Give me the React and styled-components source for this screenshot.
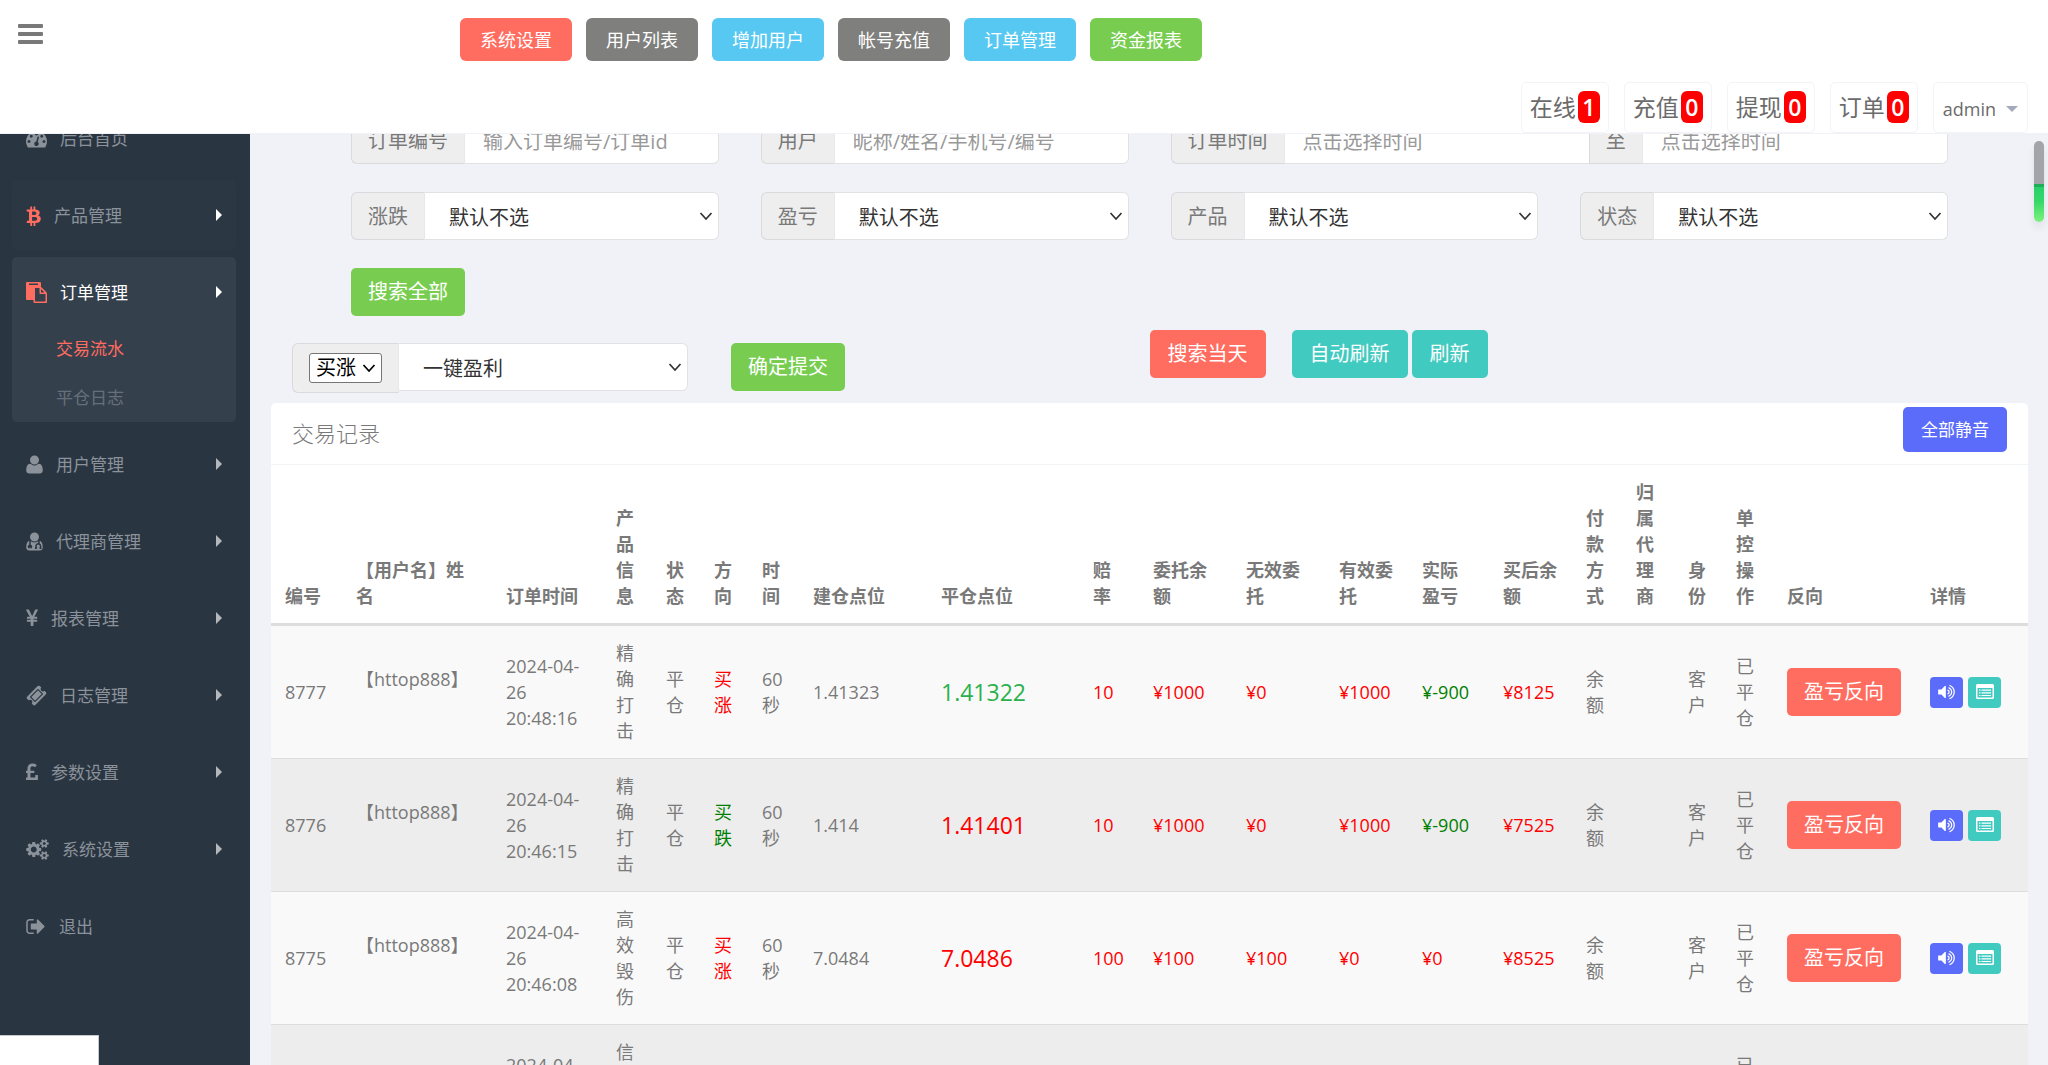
import React, { useState } from 'react';
import styled, { createGlobalStyle } from 'styled-components';

const GlobalStyle = createGlobalStyle`
  * {
    box-sizing: border-box;
  }

  body {
    margin: 0;
    background: #f1f2f7;
    color: #797979;
    font-family: "Open Sans", "Noto Sans CJK SC", sans-serif;
    font-size: 18px;
    line-height: 26px;
  }

  button, input, select {
    margin: 0;
    font-family: inherit;
  }

  a {
    color: inherit;
    text-decoration: none;
  }

  ul {
    margin: 0;
    padding: 0;
    list-style: none;
  }
`;

const colors = {
  red: '#ff6c60',
  gray: '#7f7f7e',
  blue: '#57c8f2',
  green: '#78cd51',
  teal: '#41cac0',
  indigo: '#5b6cfb',
};

const chevron = (color) =>
  `url("data:image/svg+xml,%3Csvg xmlns='http://www.w3.org/2000/svg' viewBox='0 0 14 10' fill='none' stroke='%23${color}' stroke-width='1.7'%3E%3Cpath d='M1.500 2l5.500 6 5.500-6'/%3E%3C/svg%3E")`;

/* ---------- layout ---------- */

const Page = styled.div`
  display: flex;
  flex-direction: column;
  height: 100vh;
  overflow: hidden;
`;

const Header = styled.header`
  flex: none;
  height: 134px;
  display: flex;
  flex-direction: column;
  justify-content: space-between;
  padding: 18px 20px 0 18px;
  background: #fff;
  border-bottom: 1px solid #f1f2f7;
`;

const HeaderTop = styled.div`
  display: flex;
  align-items: flex-start;
`;

const MenuToggle = styled.button`
  width: 25px;
  height: 28px;
  padding: 3px 0 0;
  border: 0;
  background: none;
  color: #797979;
  cursor: pointer;

  svg {
    display: block;
  }
`;

const QuickNav = styled.nav`
  display: flex;
  gap: 14px;
  margin-left: 417px;
`;

const QuickLink = styled.a`
  padding: 9px 20px 8px;
  border-radius: 6px;
  background: ${(p) => colors[p.$tone]};
  color: #fff;
`;

const Notices = styled.div`
  display: flex;
  justify-content: flex-end;
  gap: 15px;
`;

const Notice = styled.a`
  display: flex;
  align-items: center;
  gap: 2px;
  height: 51px;
  padding: 0 8px 2px;
  border: 1px solid #f3f4f8;
  border-radius: 5px;
  font-size: 23px;
  color: #6b6b6b;
`;

const Count = styled.span`
  width: 22px;
  height: 32px;
  border-radius: 6px;
  background: #f00;
  color: #fff;
  font-weight: 600;
  line-height: 32px;
  text-align: center;
`;

const UserMenu = styled.button`
  display: flex;
  align-items: center;
  gap: 10px;
  padding: 3px 9px 0;
  border: 1px solid #f3f4f8;
  border-radius: 5px;
  background: #fff;
  color: #6b6b6b;
  font-size: 18px;
`;

const CaretDown = styled.span`
  border: 6px solid transparent;
  border-top-color: #a4aabb;
  border-bottom: 0;
`;

const Body = styled.div`
  flex: 1;
  min-height: 0;
  display: flex;
  overflow: hidden;
`;

/* ---------- sidebar ---------- */

const Sidebar = styled.aside`
  flex: none;
  width: 250px;
  padding: 0 14px 0 12px;
  background: #2a3542;
  overflow: hidden;
`;

const Menu = styled.ul`
  display: flex;
  flex-direction: column;
  gap: 7px;
  margin-top: -31px;
  font-size: 17px;
`;

const MenuItem = styled.li`
  border-radius: 5px;
  background: ${(p) => (p.$open ? '#35404d' : p.$hot ? '#2c3744' : 'none')};
`;

const MenuLink = styled.a`
  display: flex;
  align-items: center;
  gap: 13px;
  height: 70px;
  padding: 0 14px;
  color: ${(p) => (p.$open ? '#fff' : '#8b929a')};

  svg {
    flex: none;
    color: ${(p) => (p.$hot ? colors.red : '#8b929a')};
  }
`;

const MenuLabel = styled.span`
  flex: 1;
  padding-top: 2px;
`;

const CaretRight = styled.span`
  border: 6px solid transparent;
  border-left-color: ${(p) => (p.$hot ? '#fff' : '#b4b7bb')};
  border-right: 0;
`;

const SubMenu = styled.ul`
  margin-top: -3px;
`;

const SubLink = styled.a`
  display: block;
  padding: 12px 44px;
  line-height: 25px;
  color: ${(p) => (p.$current ? colors.red : '#66707b')};
`;

/* ---------- search form ---------- */

const Main = styled.main`
  flex: 1;
  min-width: 0;
  padding: 0 20px 0 21px;
`;

const Filters = styled.form`
  display: grid;
  grid-template-columns: repeat(4, 1fr);
  gap: 28px 42px;
  margin-top: -18px;
  padding: 0 80px;
`;

const Group = styled.div`
  display: flex;
  align-items: flex-start;
  grid-column: span ${(p) => p.$span || 1};
`;

const Addon = styled.label`
  flex: none;
  height: 48px;
  padding: 0 16px;
  border: 1px solid #d9d9de;
  border-right-color: #e8e8ec;
  border-radius: ${(p) => (p.$inner ? 0 : '6px 0 0 6px')};
  background: #eee;
  color: #797979;
  font-size: 20px;
  line-height: 48px;
`;

const field = `
  flex: 1;
  min-width: 0;
  height: 48px;
  border: 1px solid #e2e2e4;
  border-left: 0;
  border-radius: 0 6px 6px 0;
  font-size: 20px;
`;

const Field = styled.input`
  ${field}
  padding: 2px 18px 0;
  background: #fff;
  color: #333;

  &:not(:last-child) {
    border-right: 0;
    border-radius: 0;
  }

  &::placeholder {
    color: #999;
  }
`;

const Select = styled.select`
  ${field}
  appearance: none;
  padding: 2px 30px 0 24px;
  background: #fff ${chevron('333')} no-repeat right 5px center / 14px 10px;
  color: #333;
`;

const Button = styled.button`
  height: 48px;
  padding: 0 17px;
  border: 0;
  border-radius: 5px;
  background: ${(p) => colors[p.$tone]};
  color: #fff;
  font-size: 20px;
  line-height: 26px;
  white-space: nowrap;
  cursor: pointer;
`;

const ButtonCell = styled.div`
  grid-column: 1 / -1;
  display: flex;
`;

const Tools = styled.div`
  display: grid;
  grid-template-columns: 1fr 1fr;
  padding: 14px 0 10px;
`;

const OneKey = styled.form`
  display: flex;
  gap: 43px;
  padding: 13px 0 0 21px;
`;

const OneKeyGroup = styled(Group)`
  width: 396px;
`;

const SelectAddon = styled.div`
  display: flex;
  align-items: center;
  height: 50px;
  padding: 0 16px;
  border: 1px solid #d9d9de;
  border-right-color: #e8e8ec;
  border-radius: 6px 0 0 6px;
  background: #eee;
`;

const MiniSelect = styled.select`
  appearance: none;
  width: 73px;
  height: 30px;
  padding: 0 0 0 6px;
  border: 1px solid #767676;
  border-radius: 3px;
  background: #fff ${chevron('000')} no-repeat right 5px center / 14px 10px;
  color: #000;
  font-size: 20px;
  line-height: 26px;
`;

const Actions = styled.div`
  display: flex;
  align-items: flex-start;
  gap: 4px;
`;

const ActionButton = styled(Button)`
  padding: 0 18px;
`;

const TodayButton = styled(ActionButton)`
  margin-right: 22px;
`;

/* ---------- records ---------- */

const Panel = styled.section`
  border-radius: 5px 5px 0 0;
  background: #fff;
`;

const PanelHeader = styled.div`
  display: flex;
  align-items: flex-start;
  justify-content: space-between;
  height: 62px;
  padding: 4px 21px 0;
  border-bottom: 1px solid #f3f4f8;
`;

const PanelTitle = styled.h2`
  margin: 0;
  font-size: 22px;
  font-weight: 300;
  line-height: 52px;
`;

const MuteButton = styled(Button)`
  height: 45px;
  padding: 0 18px;
  font-size: 17px;
`;

const Table = styled.table`
  width: 100%;
  table-layout: fixed;
  border-collapse: separate;
  border-spacing: 0;
`;

const Th = styled.th`
  padding: 14px;
  border-bottom: 3px solid #ddd;
  font-weight: 700;
  text-align: left;
  vertical-align: bottom;
`;

const Row = styled.tr`
  background: ${(p) => (p.$even ? '#ededed' : '#f9f9f9')};
`;

const Td = styled.td`
  height: 133px;
  padding: 14px;
  border-bottom: 1px solid #ddd;
  color: ${(p) => p.$color || 'inherit'};
  font-size: ${(p) => (p.$big ? '23px' : '18px')};
  vertical-align: middle;
`;

const IconButtons = styled.div`
  display: flex;
  gap: 5px;
`;

const IconButton = styled.button`
  display: flex;
  align-items: center;
  justify-content: center;
  width: 33px;
  height: 31px;
  padding: 0;
  border: 0;
  border-radius: 4px;
  background: ${(p) => colors[p.$tone]};
  color: #fff;
`;

/* ---------- floating bits ---------- */

const ScrollThumb = styled.div`
  position: fixed;
  top: 141px;
  right: 4px;
  width: 10px;
  height: 81px;
  border-radius: 5px;
  background: linear-gradient(#a3a3a8 0 43px, #1fae58 43px 46px, #28d06c 46px, #35d768 60px, #7df27c);
  box-shadow: 0 6px 8px rgba(0, 0, 0, 0.08);
`;

const StatusBubble = styled.div`
  position: fixed;
  left: 0;
  bottom: 0;
  width: 99px;
  height: 30px;
  border: 1px solid #c5c8cc;
  border-width: 1px 1px 0 0;
  background: #fff;
`;

/* ---------- icons ---------- */

const userHead =
  'M1088 1024q0-159-112.5-271.5t-271.5-112.5t-271.5 112.5t-112.5 271.5t112.5 271.5t271.5 112.5t271.5-112.5t112.5-271.5z';

// width is the advance of the glyph on an 1792 unit em; "up" marks y-up outlines
const glyphs = {
  dashboard: {
    width: 1792,
    d: 'M384 1152q0-53-37.5-90.5t-90.5-37.5-90.5 37.5-37.5 90.5 37.5 90.5 90.5 37.5 90.5-37.5 37.5-90.5zm192-448q0-53-37.5-90.5t-90.5-37.5-90.5 37.5-37.5 90.5 37.5 90.5 90.5 37.5 90.5-37.5 37.5-90.5zm428 481l101-382q6-26-7.5-48.5t-38.5-29.5-48 6.5-30 39.5l-101 382q-60 5-107 43.5t-63 98.5q-20 77 20 146t117 89 146-20 89-117q16-60-6-117t-72-91zm660-33q0-53-37.5-90.5t-90.5-37.5-90.5 37.5-37.5 90.5 37.5 90.5 90.5 37.5 90.5-37.5 37.5-90.5zm-640-640q0-53-37.5-90.5t-90.5-37.5-90.5 37.5-37.5 90.5 37.5 90.5 90.5 37.5 90.5-37.5 37.5-90.5zm448 192q0-53-37.5-90.5t-90.5-37.5-90.5 37.5-37.5 90.5 37.5 90.5 90.5 37.5 90.5-37.5 37.5-90.5zm320 448q0 261-141 483-19 29-54 29h-1402q-35 0-54-29-141-221-141-483 0-182 71-348t191-286 286-191 348-71 348 71 286 191 191 286 71 348z',
  },
  btc: {
    width: 1280,
    d: 'M1167 640q18 182-131 258 117 28 175 103t45 214q-7 71-32.5 125t-64.5 89-97 58.5-121.5 34.5-145.5 15v255h-154v-251q-80 0-122-1v252h-154v-255q-18 0-54-.5t-55-.5h-200l31-183h111q50 0 58-51v-402h16q-6-1-16-1v-287q-13-68-89-68h-111v-164l212 1q64 0 97-1v-252h154v247q82-2 122-2v-245h154v252q79 7 140 22.5t113 45 82.5 78 36.5 114.5zm-215 545q0-36-15-64t-37-46-57.5-30.5-65.5-18.5-74-9-69-3-64.5 1-47.5 1v338q8 0 37 .5t48 .5 53-1.5 58.5-4 57-8.5 55.5-14 47.5-21 39.5-30 24.5-40 9.5-51zm-71-476q0-33-12.5-58.5t-30.5-42-48-28-55-16.5-61.5-8-58-2.5-54 1-39.5 .5v307q5 0 34.5 .5t46.5 0 50-2 55-5.5 51.5-11 48.5-18.5 37-27 27-38.5 9-51z',
  },
  paste: {
    width: 1792,
    d: 'M768 1664h896v-640h-416q-40 0-68-28t-28-68v-416h-384v1152zm256-1440v-64q0-13-9.5-22.5t-22.5-9.5h-704q-13 0-22.5 9.5t-9.5 22.5v64q0 13 9.5 22.5t22.5 9.5h704q13 0 22.5-9.5t9.5-22.5zm256 672h299l-299-299v299zm512 128v672q0 40-28 68t-68 28h-960q-40 0-68-28t-28-68v-160h-544q-40 0-68-28t-28-68v-1344q0-40 28-68t68-28h1088q40 0 68 28t28 68v328q21 13 36 28l408 408q28 28 48 76t20 88z',
  },
  user: {
    width: 1408,
    up: true,
    d: 'M1408 131q0-120-73-189.5t-194-69.5h-874q-121 0-194 69.5t-73 189.5q0 53 3.5 103.5t14 109t26.5 108.5t43 97.5t62 81t85.5 53.5t111.5 20q9 0 42-21.5t74.5-48t108-48t133.5-21.5t133.5 21.5t108 48t74.5 48t42 21.5q61 0 111.5-20t85.5-53.5t62-81t43-97.5t26.5-108.5t14-109t3.5-103.5z' + userHead,
  },
  doctor: {
    width: 1408,
    up: true,
    d: 'M384 64q0-26-19-45t-45-19t-45 19t-19 45t19 45t45 19t45-19t19-45zM1408 131q0-121-73-190t-194-69h-874q-121 0-194 69t-73 190q0 68 5.5 131t24 138t47.5 132.5t81 103t120 60.5q-22-52-22-120v-203q-58-20-93-70t-35-111q0-80 56-136t136-56t136 56t56 136q0 61-35.5 111t-92.5 70v203q0 62 25 93q132-104 295-104t295 104q25-31 25-93v-64q-106 0-181-75t-75-181v-89q-32-29-32-71q0-40 28-68t68-28t68 28t28 68q0 42-32 71v89q0 52 38 90t90 38t90-38t38-90v-89q-32-29-32-71q0-40 28-68t68-28t68 28t28 68q0 42-32 71v89q0 68-34.5 127.5t-93.5 93.5q0 10 .5 42.5t0 48t-2.5 41.5t-7 47t-13 40q68-15 120-60.5t81-103t47.5-132.5t24-138t5.5-131z' + userHead,
  },
  yen: {
    width: 1027,
    d: 'M603 1536h-172q-13 0-22.5-9t-9.5-23v-330h-288q-13 0-22.5-9t-9.5-23v-103q0-13 9.5-22.5t22.5-9.5h288v-85h-288q-13 0-22.5-9t-9.5-23v-104q0-13 9.5-22.5t22.5-9.5h214l-321-578q-8-16 0-32 10-16 28-16h194q19 0 29 18l215 425q19 38 56 125 10-24 30.5-68t27.5-61l191-420q8-19 29-19h191q17 0 27 16 9 14 1 31l-313 579h215q13 0 22.5 9.5t9.5 22.5v104q0 14-9.5 23t-22.5 9h-290v85h290q13 0 22.5 9.5t9.5 22.5v103q0 14-9.5 23t-22.5 9h-290v330q0 13-9.5 22.5t-22.5 9.5z',
  },
  ticket: {
    width: 1792,
    d: 'M1024 452l316 316-572 572-316-316zm-211 979l618-618q19-19 19-45t-19-45l-362-362q-18-18-45-18t-45 18l-618 618q-19 19-19 45t19 45l362 362q18 18 45 18t45-18zm889-637l-907 908q-37 37-90.5 37t-90.5-37l-126-126q56-56 56-136t-56-136-136-56-136 56l-125-126q-37-37-37-90.5t37-90.5l907-906q37-37 90.5-37t90.5 37l125 125q-56 56-56 136t56 136 136 56 136-56l126 125q37 37 37 90.5t-37 90.5z',
  },
  pound: {
    width: 1027,
    d: 'M1020 1137v367q0 14-9 23t-23 9h-956q-14 0-23-9t-9-23v-150q0-13 9.5-22.5t22.5-9.5h97v-383h-95q-14 0-23-9.5t-9-22.5v-131q0-14 9-23t23-9h95v-223q0-171 123.5-282t313.5-111q185 0 335 125 9 8 10 20.5t-7 22.5l-103 127q-9 11-22 12-13 2-23-7-5-5-26-19t-69-32-93-18q-85 0-137 47t-52 123v215h305q13 0 22.5 9t9.5 23v131q0 13-9.5 22.5t-22.5 9.5h-305v379h414v-181q0-13 9-22.5t23-9.5h164q14 0 23 9.5t9 22.5z',
  },
  cogs: {
    width: 1920,
    d: 'M896 896q0-106-75-181t-181-75-181 75-75 181 75 181 181 75 181-75 75-181zm768 512q0-52-38-90t-90-38-90 38-38 90q0 53 37.5 90.5t90.5 37.5 90.5-37.5 37.5-90.5zm0-1024q0-52-38-90t-90-38-90 38-38 90q0 53 37.5 90.5t90.5 37.5 90.5-37.5 37.5-90.5zm-384 421v185q0 10-7 19.5t-16 10.5l-155 24q-11 35-32 76 34 48 90 115 7 11 7 20 0 12-7 19-23 30-82.5 89.5t-78.5 59.5q-11 0-21-7l-115-90q-37 19-77 31-11 108-23 155-7 24-30 24h-186q-11 0-20-7.5t-10-17.5l-23-153q-34-10-75-31l-118 89q-7 7-20 7-11 0-21-8-144-133-144-160 0-9 7-19 10-14 41-53t47-61q-23-44-35-82l-152-24q-10-1-17-9.5t-7-19.5v-185q0-10 7-19.5t16-10.5l155-24q11-35 32-76-34-48-90-115-7-11-7-20 0-12 7-20 22-30 82-89t79-59q11 0 21 7l115 90q34-18 77-32 11-108 23-154 7-24 30-24h186q11 0 20 7.5t10 17.5l23 153q34 10 75 31l118-89q8-7 20-7 11 0 21 8 144 133 144 160 0 8-7 19-12 16-42 54t-45 60q23 48 34 82l152 23q10 2 17 10.5t7 19.5zm640 533v140q0 16-149 31-12 27-30 52 51 113 51 138 0 4-4 7-122 71-124 71-8 0-46-47t-52-68q-20 2-30 2t-30-2q-14 21-52 68t-46 47q-2 0-124-71-4-3-4-7 0-25 51-138-18-25-30-52-149-15-149-31v-140q0-16 149-31 13-29 30-52-51-113-51-138 0-4 4-7 4-2 35-20t59-34 30-16q8 0 46 46.5t52 67.5q20-2 30-2t30 2q51-71 92-112l6-2q4 0 124 70 4 3 4 7 0 25-51 138 17 23 30 52 149 15 149 31zm0-1024v140q0 16-149 31-12 27-30 52 51 113 51 138 0 4-4 7-122 71-124 71-8 0-46-47t-52-68q-20 2-30 2t-30-2q-14 21-52 68t-46 47q-2 0-124-71-4-3-4-7 0-25 51-138-18-25-30-52-149-15-149-31v-140q0-16 149-31 13-29 30-52-51-113-51-138 0-4 4-7 4-2 35-20t59-34 30-16q8 0 46 46.5t52 67.5q20-2 30-2t30 2q51-71 92-112l6-2q4 0 124 70 4 3 4 7 0 25-51 138 17 23 30 52 149 15 149 31z',
  },
  signOut: {
    width: 1664,
    d: 'M640 1440q0 4 1 20t.5 26.5-3 23.5-10 19.5-20.5 6.5h-320q-119 0-203.5-84.5t-84.5-203.5v-704q0-119 84.5-203.5t203.5-84.5h320q13 0 22.5 9.5t9.5 22.5q0 4 1 20t.5 26.5-3 23.5-10 19.5-20.5 6.5h-320q-66 0-113 47t-47 113v704q0 66 47 113t113 47h312l11.5 1 11.5 3 8 5.5 7 9 2 13.5zm928-544q0 26-19 45l-544 544q-19 19-45 19t-45-19-19-45v-288h-448q-26 0-45-19t-19-45v-384q0-26 19-45t45-19h448v-288q0-26 19-45t45-19 45 19l544 544q19 19 19 45z',
  },
  volume: {
    width: 1664,
    d: 'M768 352v1088q0 26-19 45t-45 19-45-19l-333-333h-262q-26 0-45-19t-19-45v-384q0-26 19-45t45-19h262l333-333q19-19 45-19t45 19 19 45zm384 544q0 76-42.5 141.5t-112.5 93.5q-10 5-25 5-26 0-45-18.5t-19-45.5q0-21 12-35.5t29-25 34-23 29-36 12-56.5-12-56.5-29-36-34-23-29-25-12-35.5q0-27 19-45.5t45-18.5q15 0 25 5 70 27 112.5 93t42.5 142zm256 0q0 153-85 282.5t-225 188.5q-13 5-25 5-27 0-46-19t-19-45q0-39 39-59 56-29 76-44 74-54 115.5-135.5t41.5-173.5-41.5-173.5-115.5-135.5q-20-15-76-44-39-20-39-59 0-26 19-45t45-19q13 0 26 5 140 59 225 188.5t85 282.5zm256 0q0 230-127 422.5t-338 283.5q-13 5-26 5-26 0-45-19t-19-45q0-36 39-59 7-4 22.5-10.5t22.5-10.5q46-25 82-51 123-91 192-227t69-289-69-289-192-227q-36-26-82-51-7-4-22.5-10.5t-22.5-10.5q-39-23-39-59 0-26 19-45t45-19q13 0 26 5 211 91 338 283.5t127 422.5z',
  },
};

function Glyph({ name, size = 21 }) {
  const { width, up, d } = glyphs[name];
  return (
    <svg
      width={Math.round((width / 1792) * size)}
      height={size}
      viewBox={`0 0 ${width} 1792`}
      fill="currentColor"
      aria-hidden="true"
    >
      <path d={d} transform={up ? 'translate(0 1536) scale(1 -1)' : undefined} />
    </svg>
  );
}

function BarsIcon() {
  return (
    <svg width="25" height="22" viewBox="0 0 25 22" fill="currentColor" aria-hidden="true">
      <rect width="25" height="4" y="1" rx="1" />
      <rect y="9" width="25" height="4" rx="1" />
      <rect y="17" width="25" height="4" rx="1" />
    </svg>
  );
}

function ListIcon() {
  return (
    <svg width="18" height="16" viewBox="0 0 18 16" fill="currentColor" aria-hidden="true">
      <path
        fillRule="evenodd"
        d="M1.500 0h15a1.500 1.500 0 0 1 1.500 1.500v12a1.500 1.500 0 0 1-1.500 1.500h-15a1.500 1.500 0 0 1-1.500-1.500v-12a1.500 1.500 0 0 1 1.500-1.500zM1.500 4v9.500h15v-9.500z"
      />
      <path d="M3 5.500h1.500v1.200H3zM5.500 5.500H15v1.200H5.500zM3 8.200h1.500v1.200H3zM5.500 8.200H15v1.200H5.500zM3 10.900h1.500v1.200H3zM5.500 10.900H15v1.200H5.500z" />
    </svg>
  );
}

/* ---------- data ---------- */

const quickLinks = [
  ['系统设置', 'red'],
  ['用户列表', 'gray'],
  ['增加用户', 'blue'],
  ['帐号充值', 'gray'],
  ['订单管理', 'blue'],
  ['资金报表', 'green'],
];

const notices = [
  ['在线', 1],
  ['充值', 0],
  ['提现', 0],
  ['订单', 0],
];

const menu = [
  { label: '后台首页', icon: 'dashboard', leaf: true },
  { label: '产品管理', icon: 'btc', hot: true },
  { label: '订单管理', icon: 'paste', hot: true, children: ['交易流水', '平仓日志'] },
  { label: '用户管理', icon: 'user' },
  { label: '代理商管理', icon: 'doctor' },
  { label: '报表管理', icon: 'yen' },
  { label: '日志管理', icon: 'ticket' },
  { label: '参数设置', icon: 'pound' },
  { label: '系统设置', icon: 'cogs' },
  { label: '退出', icon: 'signOut', leaf: true },
];

const columns = [
  ['编号', 71],
  ['【用户名】姓名', 150],
  ['订单时间', 110],
  ['产品信息', 50],
  ['状态', 48],
  ['方向', 48],
  ['时间', 51],
  ['建仓点位', 128],
  ['平仓点位', 152],
  ['赔率', 60],
  ['委托余额', 93],
  ['无效委托', 93],
  ['有效委托', 83],
  ['实际盈亏', 81],
  ['买后余额', 83],
  ['付款方式', 50],
  ['归属代理商', 52],
  ['身份', 48],
  ['单控操作', 51],
  ['反向', 143],
  ['详情', 112],
];

const orders = [
  { id: 8777, time: '2024-04-26 20:48:16', product: '精确打击', up: true, open: '1.41323', close: '1.41322', closeColor: '#2bb14c', odds: 10, stake: 1000, invalid: 0, valid: 1000, profit: -900, balance: 8125 },
  { id: 8776, time: '2024-04-26 20:46:15', product: '精确打击', up: false, open: '1.414', close: '1.41401', closeColor: '#f00', odds: 10, stake: 1000, invalid: 0, valid: 1000, profit: -900, balance: 7525 },
  { id: 8775, time: '2024-04-26 20:46:08', product: '高效毁伤', up: true, open: '7.0484', close: '7.0486', closeColor: '#f00', odds: 100, stake: 100, invalid: 100, valid: 0, profit: 0, balance: 8525 },
  { id: 8774, time: '2024-04-26 20:45:52', product: '信息支援', up: true, open: '7.0482', close: '7.0485', closeColor: '#f00', odds: 100, stake: 100, invalid: 100, valid: 0, profit: 0, balance: 8625 },
];

/* ---------- parts ---------- */

function SelectField({ id, label }) {
  return (
    <Group>
      <Addon htmlFor={id}>{label}</Addon>
      <Select id={id} defaultValue="">
        <option value="">默认不选</option>
      </Select>
    </Group>
  );
}

function OrderRow({ order, even }) {
  return (
    <Row $even={even}>
      <Td>{order.id}</Td>
      <Td>
        【httop888】
        <br />
        &nbsp;
      </Td>
      <Td>{order.time}</Td>
      <Td>{order.product}</Td>
      <Td>平仓</Td>
      <Td $color={order.up ? '#f00' : '#008000'}>{order.up ? '买涨' : '买跌'}</Td>
      <Td>60秒</Td>
      <Td>{order.open}</Td>
      <Td $big $color={order.closeColor}>{order.close}</Td>
      <Td $color="#f00">{order.odds}</Td>
      <Td $color="#f00">¥{order.stake}</Td>
      <Td $color="#f00">¥{order.invalid}</Td>
      <Td $color="#f00">¥{order.valid}</Td>
      <Td $color={order.profit < 0 ? '#008000' : '#f00'}>¥{order.profit}</Td>
      <Td $color="#f00">¥{order.balance}</Td>
      <Td>余额</Td>
      <Td />
      <Td>客户</Td>
      <Td>已平仓</Td>
      <Td>
        <Button type="button" $tone="red">盈亏反向</Button>
      </Td>
      <Td>
        <IconButtons>
          <IconButton type="button" $tone="indigo" aria-label="静音">
            <Glyph name="volume" size={18} />
          </IconButton>
          <IconButton type="button" $tone="teal" aria-label="详情">
            <ListIcon />
          </IconButton>
        </IconButtons>
      </Td>
    </Row>
  );
}

export default function App() {
  const [opened, setOpened] = useState('订单管理');

  return (
    <Page>
      <GlobalStyle />

      <Header>
        <HeaderTop>
          <MenuToggle type="button" aria-label="菜单">
            <BarsIcon />
          </MenuToggle>
          <QuickNav>
            {quickLinks.map(([label, tone]) => (
              <QuickLink key={label} href="#" $tone={tone}>{label}</QuickLink>
            ))}
          </QuickNav>
        </HeaderTop>
        <Notices>
          {notices.map(([label, count]) => (
            <Notice key={label} href="#">
              {label}
              <Count>{count}</Count>
            </Notice>
          ))}
          <UserMenu type="button">
            admin
            <CaretDown />
          </UserMenu>
        </Notices>
      </Header>

      <Body>
        <Sidebar>
          <Menu>
            {menu.map((item) => {
              const open = Boolean(item.children) && opened === item.label;
              return (
                <MenuItem key={item.label} $open={open} $hot={item.hot}>
                  <MenuLink href="#" $open={open} $hot={item.hot} onClick={() => setOpened(item.label)}>
                    <Glyph name={item.icon} />
                    <MenuLabel>{item.label}</MenuLabel>
                    {!item.leaf && <CaretRight $hot={item.hot} />}
                  </MenuLink>
                  {open && (
                    <SubMenu>
                      {item.children.map((child, i) => (
                        <li key={child}>
                          <SubLink href="#" $current={i === 0}>{child}</SubLink>
                        </li>
                      ))}
                    </SubMenu>
                  )}
                </MenuItem>
              );
            })}
          </Menu>
        </Sidebar>

        <Main>
          <Filters onSubmit={(e) => e.preventDefault()}>
            <Group>
              <Addon htmlFor="orderNo">订单编号</Addon>
              <Field id="orderNo" placeholder="输入订单编号/订单id" />
            </Group>
            <Group>
              <Addon htmlFor="user">用户</Addon>
              <Field id="user" placeholder="昵称/姓名/手机号/编号" />
            </Group>
            <Group $span={2}>
              <Addon htmlFor="from">订单时间</Addon>
              <Field id="from" placeholder="点击选择时间" />
              <Addon htmlFor="to" $inner>至</Addon>
              <Field id="to" placeholder="点击选择时间" />
            </Group>
            <SelectField id="direction" label="涨跌" />
            <SelectField id="profit" label="盈亏" />
            <SelectField id="product" label="产品" />
            <SelectField id="state" label="状态" />
            <ButtonCell>
              <Button type="submit" $tone="green">搜索全部</Button>
            </ButtonCell>
          </Filters>

          <Tools>
            <OneKey onSubmit={(e) => e.preventDefault()}>
              <OneKeyGroup>
                <SelectAddon>
                  <MiniSelect aria-label="方向">
                    <option>买涨</option>
                    <option>买跌</option>
                  </MiniSelect>
                </SelectAddon>
                <Select aria-label="一键操作">
                  <option>一键盈利</option>
                </Select>
              </OneKeyGroup>
              <Button type="submit" $tone="green">确定提交</Button>
            </OneKey>
            <Actions>
              <TodayButton type="button" $tone="red">搜索当天</TodayButton>
              <ActionButton type="button" $tone="teal">自动刷新</ActionButton>
              <ActionButton type="button" $tone="teal">刷新</ActionButton>
            </Actions>
          </Tools>

          <Panel>
            <PanelHeader>
              <PanelTitle>交易记录</PanelTitle>
              <MuteButton type="button" $tone="indigo">全部静音</MuteButton>
            </PanelHeader>
            <Table>
              <colgroup>
                {columns.map(([label, width]) => (
                  <col key={label} width={width} />
                ))}
              </colgroup>
              <thead>
                <tr>
                  {columns.map(([label]) => (
                    <Th key={label} scope="col">{label}</Th>
                  ))}
                </tr>
              </thead>
              <tbody>
                {orders.map((order, i) => (
                  <OrderRow key={order.id} order={order} even={i % 2 === 1} />
                ))}
              </tbody>
            </Table>
          </Panel>
        </Main>
      </Body>

      <ScrollThumb />
      <StatusBubble />
    </Page>
  );
}
